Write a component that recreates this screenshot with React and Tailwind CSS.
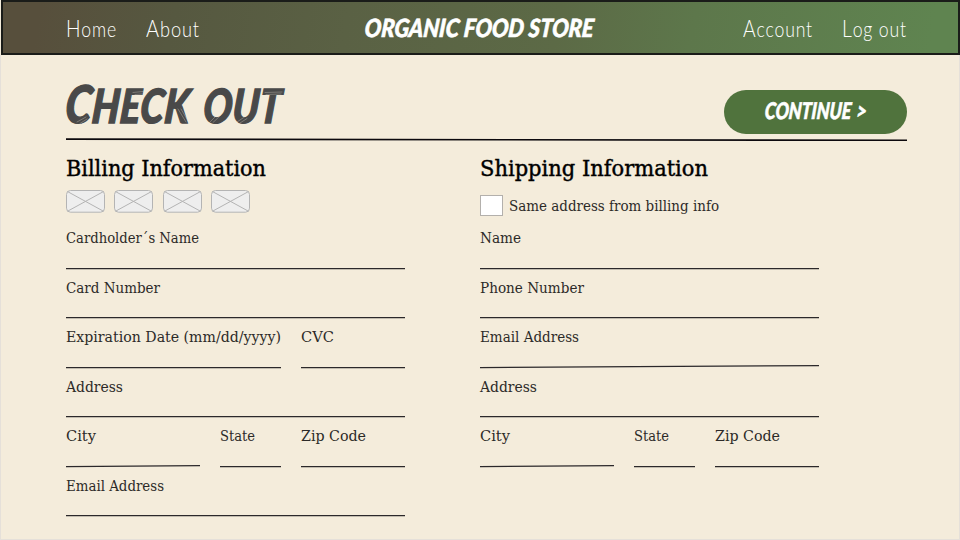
import { useLayoutEffect, useRef } from "react";

// Text set to an exact width: the natural width is measured and scaled.
function Fit({ w, className = "", children }) {
  const ref = useRef(null);
  useLayoutEffect(() => {
    const el = ref.current;
    el.style.transform = "none";
    el.style.transform = `scaleX(${w / el.getBoundingClientRect().width})`;
  }, [w]);
  return (
    <span className="block text-left whitespace-nowrap" style={{ width: w }}>
      <span ref={ref} className={`inline-block origin-left ${className}`}>
        {children}
      </span>
    </span>
  );
}

const SLAB = "font-['DejaVu_Serif_Condensed','DejaVu_Serif',serif]";
const HAND =
  "font-['Lato',sans-serif] font-light text-[21px] leading-[30px] tracking-[1px] text-white first-letter:text-[23px]";
const BRUSH = "font-['Lato',sans-serif] font-black italic";

function Rule({ w, from = 0, to = 0, thick = 1.2, color = "#2b282a" }) {
  return (
    <svg className="block h-1 shrink-0 overflow-visible" width={w} height="4">
      <line x1="0" y1={1.55 + from} x2={w} y2={1.55 + to} stroke={color} strokeWidth={thick} />
    </svg>
  );
}

function Field({ label, tw, w, rise = 0 }) {
  return (
    <div className="flex h-[49.5px] flex-col justify-between">
      <Fit w={tw} className={`${SLAB} text-[14.5px] leading-[35px] text-[#2c2a28]`}>
        {label}
      </Fit>
      <Rule w={w} to={-rise} />
    </div>
  );
}

function CardSlot() {
  return (
    <svg width="39" height="23" viewBox="0 0 39 23" fill="none" stroke="#b4b4b4">
      <rect x="0.5" y="0.5" width="38" height="21.7" rx="4" fill="#eeeeee" />
      <path d="M1.6 1.6 37.4 21.2M37.4 1.6 1.6 21.2" />
    </svg>
  );
}

// Dry-brush streaks over the title's strokes.
function Streaks() {
  return (
    <svg
      className="absolute top-0 left-0"
      width="222"
      height="80"
      viewBox="0 0 222 80"
      fill="none"
      stroke="#f4ecdb"
      strokeOpacity="0.5"
      strokeWidth="0.6"
      strokeLinecap="round"
    >
      <path d="M11 67 20 62M14 68.5 21 64M67 37.5 77 36.5M69 39.5 76 39M112 54 120 67M115 54 122 66" />
      <path d="M144 67 154 57M147 67.5 155 60M171 67 180 61M174 68 181 63.5M199 37.5 216 37M200 39.5 215 39" />
    </svg>
  );
}

export default function App() {
  return (
    <div className="flex h-[540px] w-[960px] flex-col overflow-hidden bg-[#f4ecdb]">
      <header className="ml-px flex h-[54.5px] shrink-0 items-center border-2 border-[#1a1c19] bg-[linear-gradient(100deg,#574f3c_4%,#565840_18%,#5a6144_36%,#5c6a46_58%,#5d774b_72%,#5f8450_97%)] pl-[63px]">
        <nav className="flex gap-[29px] pt-0.5">
          <Fit w={51} className={HAND}>Home</Fit>
          <Fit w={54} className={HAND}>About</Fit>
        </nav>
        <div className="ml-[165px]">
          <Fit w={229} className={`${BRUSH} text-[25px] leading-[30px] text-white [-webkit-text-stroke:0.6px_white]`}>
            <span className="inline-block -skew-x-6">ORGANIC FOOD STORE</span>
          </Fit>
        </div>
        <nav className="ml-[149px] flex gap-[29px] pt-0.5">
          <Fit w={70} className={HAND}>Account</Fit>
          <Fit w={65} className={HAND}>Log out</Fit>
        </nav>
      </header>

      <main className="grow border-x border-b border-[#e5e0d9] pl-[65px]">
        <div className="flex h-[83px] w-[841px] items-start justify-between">
          <h1 className="relative pt-[20px]">
            <Fit w={216} className={`${BRUSH} text-[47px] leading-[56px] tracking-[0.5px] text-[#494949] [word-spacing:6px] [-webkit-text-stroke:1.4px_#494949]`}>
              <span className="inline-block -skew-x-6">
                <span className="text-[52px]">C</span>HECK OUT
              </span>
            </Fit>
            <Streaks />
          </h1>
          <button className="mt-[35.5px] flex h-11 w-[183px] justify-center rounded-full bg-[#50733d] pt-[5px]">
            <Fit w={102} className={`${BRUSH} text-[23px] leading-[30px] text-white [word-spacing:2px] [-webkit-text-stroke:0.6px_white]`}>
              <span className="inline-block -skew-x-6">CONTINUE &gt;</span>
            </Fit>
          </button>
        </div>
        <Rule w={841} from={-0.45} to={0.75} thick={1.6} color="#0c090d" />

        <div className="flex gap-[75px]">
          <section className="w-[339px]">
            <h2 className="pt-[10.5px]">
              <Fit w={200} className={`${SLAB} text-[23px] leading-[32px] text-black [-webkit-text-stroke:0.4px_black]`}>
                Billing Information
              </Fit>
            </h2>
            <div className="flex h-[37px] gap-[9.4px] pt-[6px]">
              <CardSlot />
              <CardSlot />
              <CardSlot />
              <CardSlot />
            </div>
            <Field label="Cardholder´s Name" tw={133} w={339} />
            <Field label="Card Number" tw={94} w={339} />
            <div className="flex gap-5">
              <Field label="Expiration Date (mm/dd/yyyy)" tw={215} w={215} />
              <Field label="CVC" tw={33} w={104} />
            </div>
            <Field label="Address" tw={57} w={339} />
            <div className="flex gap-5">
              <Field label="City" tw={30} w={134} rise={1} />
              <Field label="State" tw={35} w={61} />
              <Field label="Zip Code" tw={65} w={104} />
            </div>
            <Field label="Email Address" tw={98} w={339} />
          </section>

          <section className="w-[339px]">
            <h2 className="pt-[10.5px]">
              <Fit w={228} className={`${SLAB} text-[23px] leading-[32px] text-black [-webkit-text-stroke:0.4px_black]`}>
                Shipping Information
              </Fit>
            </h2>
            <div className="flex h-[37px] items-start gap-[6px] pt-[11px]">
              <span className="h-[21px] w-[23px] border border-[#b3b0ac] bg-white" />
              <div className="-mt-0.5">
                <Fit w={210} className={`${SLAB} text-[14.5px] leading-[18px] text-[#2c2a28]`}>
                  Same address from billing info
                </Fit>
              </div>
            </div>
            <Field label="Name" tw={41} w={339} />
            <Field label="Phone Number" tw={104} w={339} />
            <Field label="Email Address" tw={99} w={339} rise={2} />
            <Field label="Address" tw={57} w={339} />
            <div className="flex gap-5">
              <Field label="City" tw={30} w={134} rise={1} />
              <Field label="State" tw={35} w={61} />
              <Field label="Zip Code" tw={65} w={104} />
            </div>
          </section>
        </div>
      </main>
    </div>
  );
}
